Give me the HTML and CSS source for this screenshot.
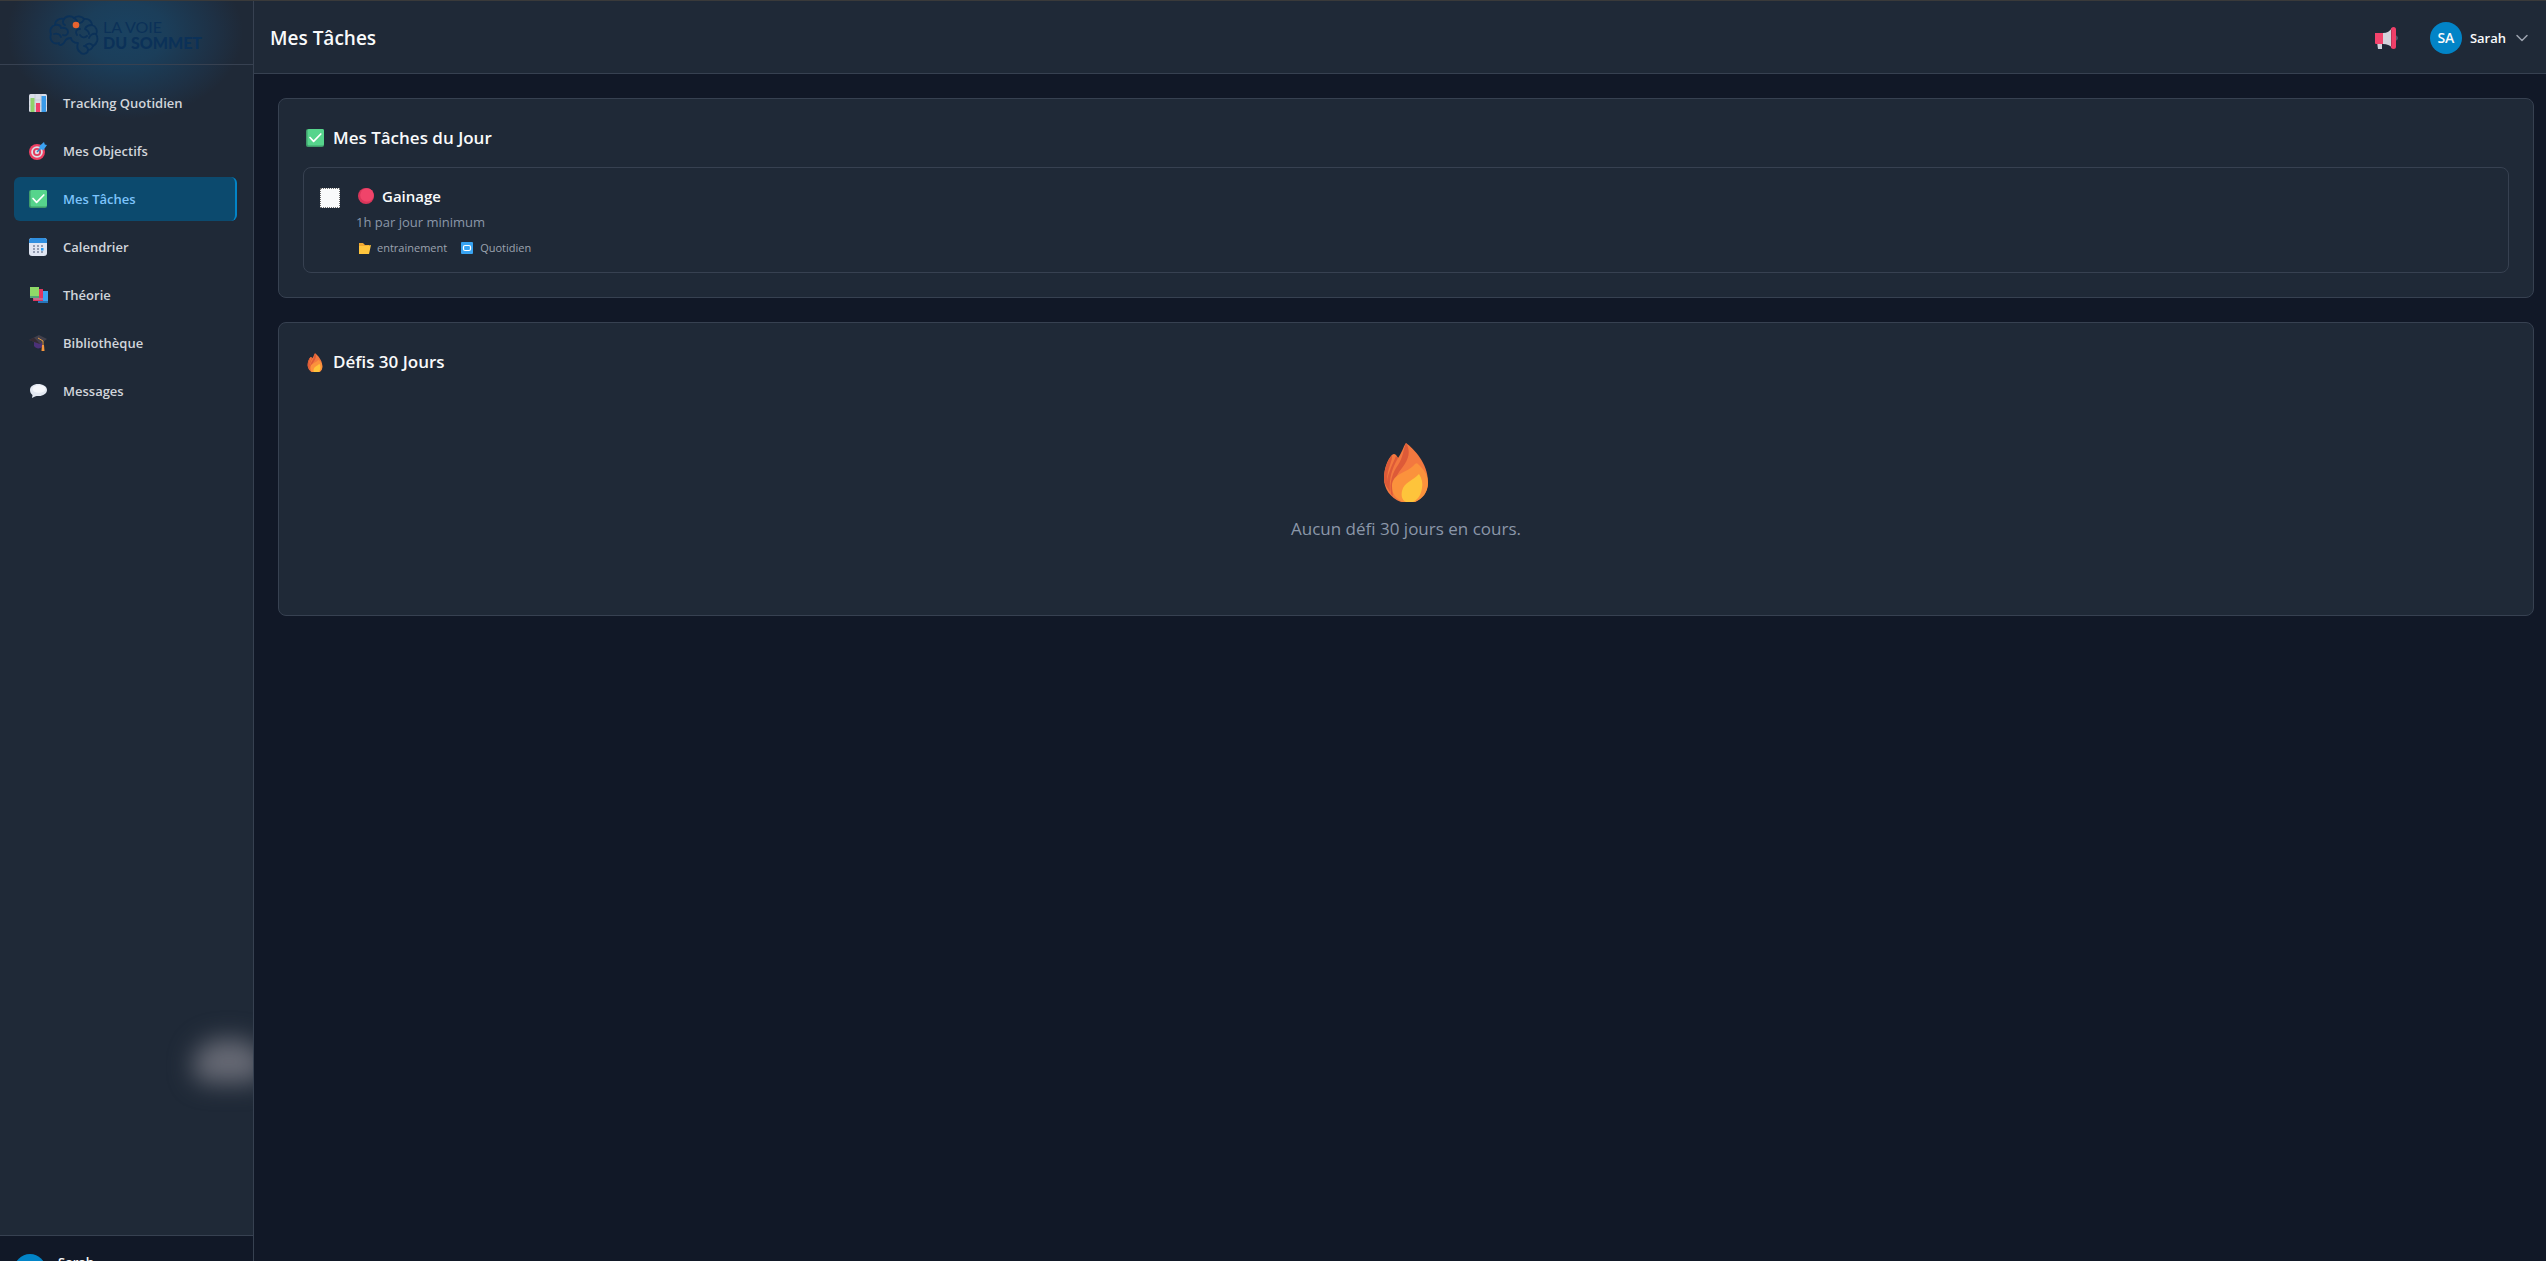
FILE: index.html
```
<!DOCTYPE html>
<html lang="fr">
<head>
    <meta charset="UTF-8">
    <meta name="viewport" content="width=device-width, initial-scale=1.0">
    <title>Mes Tâches</title>
    <link rel="stylesheet" href="styles.css">
</head>
<body>
    <!-- icones partagées -->
    <svg class="sprite" aria-hidden="true">
        <symbol id="icon-check" viewBox="0 0 20 20">
            <rect x="1" y="1" width="18" height="18" rx="2" fill="#3f9c6b"/>
            <rect x="2.5" y="1" width="16.5" height="16.5" rx="1.5" fill="#56d48c"/>
            <path d="M5 9.5l3.6 3.8L15.800 6" fill="none" stroke="#fff" stroke-width="1.7" stroke-linecap="round" stroke-linejoin="round"/>
        </symbol>
        <symbol id="icon-fire" class="fire" viewBox="0 0 60 60">
            <path d="M30 4C38 10 52 24 52 43c0 9-5 16-13 20H25C14 59 8 49 8 40c0-10 3-19 8-24 2-2 4-1 6 3 4-5 5-11 8-15z" fill="#f3783f"/>
            <path d="M8 40c0-9 3-18 8-24 1 6-5 13-5 26l2 9c-3-4-5-7-5-11zM20 17l2 2c-6 11-9 19-8 34l-3-5c-1-11 5-21 9-31zM30 4c5 8 3 16-4 25-7 9-11 17-9 28l-2-2c-2-12 2-22 7-29 5-7 5-15 8-22z" fill="#dd5a38"/>
            <path d="M44 27c6 6 8 11 8 17 0 10-6 16-13 19H27c-7-3-11-8-11-16 0-13 16-13 23-22 2-2 3 0 5 2z" fill="#fb923c"/>
            <path d="M43 35c3 5 4 9 3 14-1 8-5 12-9 14h-7c-4-2-5-6-4-11 2-9 11-10 17-17z" fill="#fec43b"/>
        </symbol>
    </svg>

    <div class="app">
        <aside class="sidebar">
            <div class="logo">
                <svg class="logo-brain" viewBox="0 0 50 40" aria-hidden="true">
                    <g fill="none" stroke="#0b3158" stroke-width="1.800" stroke-linecap="round" stroke-linejoin="round">
                        <path d="M10 28C4 30 0 25 2 19c-2-5 1-8 4-9 0-5 5-7 9-6 3-4 8-3 10-1 4-3 9-1 10 1 5-1 8 3 8 6 4 1 6 6 4 9 3 5 1 10-3 12-1 3-3 4-5 4 0 4-6 5-8 2-3-2-3-6-2-9-5 0-7-3-7-5-4 0-5 1-6 3-2 5-7 5-6 2"/>
                        <path d="M6 10c4-1 6 1 6 3M15 4c-2 3-1 5 1 6M5 19c3-1 6 0 7 3M12 13c4-1 7 1 7 4s-3 4-5 3M25 3c2 1 3 2 3 4M35 4c-1 3-3 4-5 4M43 10c-3 0-6 1-7 4 2 1 4 3 4 5M47 19c-3-1-6 1-7 4M31 14c-4 0-5 3-3 6M31 20c2 3 5 3 7 1M44 31c-2-3-5-3-7-1M39 35c0-2-2-4-4-4"/>
                    </g>
                    <circle cx="27" cy="10" r="3.300" fill="#e8632f"/>
                </svg>
                <div class="logo-text">
                    <span class="logo-light">LA VOIE</span>
                    <span class="logo-bold">DU SOMMET</span>
                </div>
            </div>

            <nav class="menu">
                <a class="menu-item" href="#tracking">
                    <svg class="menu-icon" viewBox="0 0 20 20" aria-hidden="true">
                        <rect x="1" y="1" width="18" height="18" rx="1.500" fill="#d9dde8"/>
                        <path d="M7 1v18M13 1v18M1 7h18M1 13h18" stroke="#bcc3d1" stroke-width=".6"/>
                        <rect x="2.500" y="5" width="4" height="14" fill="#8fd16a"/>
                        <rect x="8" y="10" width="4" height="9" fill="#ef3f6b"/>
                        <rect x="13.500" y="3" width="4.500" height="16" fill="#3a9ae8"/>
                    </svg>
                    Tracking Quotidien
                </a>
                <a class="menu-item" href="#objectifs">
                    <svg class="menu-icon" viewBox="0 0 20 20" aria-hidden="true">
                        <circle cx="9" cy="11" r="8" fill="#ef3f62"/>
                        <circle cx="9" cy="11" r="5.800" fill="#dcdfe6"/>
                        <circle cx="9" cy="11" r="4" fill="#e23b5d"/>
                        <circle cx="9" cy="11" r="2.200" fill="#dcdfe6"/>
                        <path d="M9 11l5-5" stroke="#3180c4" stroke-width="1.500"/>
                        <path d="M11.500 8V5L16 1l.8 2.500L19 4l-3.500 5z" fill="#3ba2f2"/>
                    </svg>
                    Mes Objectifs
                </a>
                <a class="menu-item active" href="#taches" aria-current="page">
                    <svg class="menu-icon" aria-hidden="true"><use href="#icon-check"/></svg>
                    Mes Tâches
                </a>
                <a class="menu-item" href="#calendrier">
                    <svg class="menu-icon" viewBox="0 0 20 20" aria-hidden="true">
                        <rect x="1" y="1" width="18" height="18" rx="3" fill="#dfe5f2"/>
                        <path d="M1 6V4a3 3 0 0 1 3-3h12a3 3 0 0 1 3 3v2z" fill="#2f8fe0"/>
                        <path d="M5 8h2v2H5zM9 8h2v2H9zM13 8h2v2h-2zM5 11h2v2H5zM9 11h2v2H9zM5 14h2v2H5zM9 14h2v2H9zM13 14h2v2h-2z" fill="#949db2"/>
                        <rect x="13" y="11" width="2.500" height="2.500" fill="#259af0"/>
                    </svg>
                    Calendrier
                </a>
                <a class="menu-item" href="#theorie">
                    <svg class="menu-icon" viewBox="0 0 20 20" aria-hidden="true">
                        <path d="M9 6h11v12H11z" fill="#3aa5f2"/>
                        <path d="M10 16h10v2H10z" fill="#2873b8"/>
                        <path d="M5 4h10v12H5z" fill="#df3760"/>
                        <path d="M5 13h10v2H6z" fill="#c5698e"/>
                        <path d="M2 2h9v11H3L2 12z" fill="#8fd968"/>
                        <path d="M2 11h9v2H2z" fill="#50a579"/>
                    </svg>
                    Théorie
                </a>
                <a class="menu-item" href="#bibliotheque">
                    <svg class="menu-icon" viewBox="0 0 20 20" aria-hidden="true">
                        <path d="M6 9v4c2 3 6 3 8 1V8z" fill="#4b3178"/>
                        <path d="M1 7l10-5 8 4-7 5z" fill="#42404c"/>
                        <path d="M1 7l5-2.500L12 11z" fill="#352a33"/>
                        <path d="M10 5l5 3v6" fill="none" stroke="#e39a45"/>
                        <path d="M14 12h2l.5 6h-3z" fill="#f7963d"/>
                    </svg>
                    Bibliothèque
                </a>
                <a class="menu-item" href="#messages">
                    <svg class="menu-icon" viewBox="0 0 20 20" aria-hidden="true">
                        <path d="M10 3c5 0 9 2.500 9 6s-4 6-8 6c-2 0-3 0-4 .5L4 17l.5-3C3 13 2 11 2 9c0-3.500 3.500-6 8-6z" fill="#e3e8f1"/>
                        <ellipse cx="11" cy="8" rx="6.500" ry="3.800" fill="#f5f7fb"/>
                    </svg>
                    Messages
                </a>
            </nav>

            <div class="cloud"></div>

            <div class="sidebar-user">
                <span class="avatar">SA</span>
                <span class="sidebar-name">Sarah</span>
            </div>
        </aside>

        <div class="content">
            <header class="topbar">
                <h1>Mes Tâches</h1>
                <div class="topbar-right">
                    <button class="icon-btn" type="button" aria-label="Annonces">
                        <svg viewBox="0 0 24 24" aria-hidden="true">
                            <path d="M21 9c4 1 4 5 0 6z" fill="#4e5a6b"/>
                            <path d="M3 16h5v7H4z" fill="#cdd0da"/>
                            <path d="M1 7h8v11H2a1 1 0 0 1-1-1z" fill="#f3436c"/>
                            <path d="M9 7c4 0 7-2 9-5v20c-2-3-5-4-9-4z" fill="#d3d3dc"/>
                            <rect x="17" y="1" width="5" height="22" rx="2.500" fill="#ef3f68"/>
                            <path d="M17.500 4v16" stroke="#bd3458"/>
                        </svg>
                    </button>
                    <button class="user-btn" type="button">
                        <span class="avatar">SA</span>
                        <span class="user-name">Sarah</span>
                        <svg class="chevron" viewBox="0 0 16 16" aria-hidden="true">
                            <path d="M3 5.500l5 5 5-5" fill="none" stroke="#9ca3af" stroke-width="1.500" stroke-linecap="round" stroke-linejoin="round"/>
                        </svg>
                    </button>
                </div>
            </header>

            <main class="page">
                <section class="card">
                    <h2>
                        <svg class="title-icon" aria-hidden="true"><use href="#icon-check"/></svg>
                        Mes Tâches du Jour
                    </h2>
                    <div class="task">
                        <input class="task-check" type="checkbox" id="task-gainage">
                        <div class="task-body">
                            <label class="task-title" for="task-gainage">
                                <svg class="dot" viewBox="0 0 20 20" aria-hidden="true">
                                    <circle cx="10" cy="10" r="8" fill="#d9365a"/>
                                    <circle cx="11" cy="9" r="6.800" fill="#f0446a"/>
                                </svg>
                                Gainage
                            </label>
                            <p class="task-desc">1h par jour minimum</p>
                            <div class="task-meta">
                                <span class="tag">
                                    <svg class="tag-icon" viewBox="0 0 16 16" aria-hidden="true">
                                        <path d="M3 3h4l2 2h4v9H3z" fill="#f0a832"/>
                                        <path d="M3 14V6h7l5-1-2 9z" fill="#ffc53d"/>
                                    </svg>
                                    entrainement
                                </span>
                                <span class="tag">
                                    <svg class="tag-icon" viewBox="0 0 16 16" aria-hidden="true">
                                        <rect x="2" y="2" width="12" height="12" rx="1" fill="#38a3f1"/>
                                        <rect x="4.500" y="5.500" width="7" height="5" rx="1.500" fill="none" stroke="#fff" stroke-width="1.200"/>
                                    </svg>
                                    Quotidien
                                </span>
                            </div>
                        </div>
                    </div>
                </section>

                <section class="card">
                    <h2>
                        <svg class="title-icon" aria-hidden="true"><use href="#icon-fire"/></svg>
                        Défis 30 Jours
                    </h2>
                    <div class="empty">
                        <svg class="empty-icon" aria-hidden="true"><use href="#icon-fire"/></svg>
                        <p>Aucun défi 30 jours en cours.</p>
                    </div>
                </section>
            </main>
        </div>
    </div>
</body>
</html>
```
FILE: styles.css
```
* {
    box-sizing: border-box;
    margin: 0;
    padding: 0;
}

body {
    font-family: "Open Sans", "Noto Sans", sans-serif;
    background-color: #111827;
    color: #f9fafb;
    overflow: hidden;
}

button {
    font: inherit;
    color: inherit;
    background: none;
    border: none;
    cursor: pointer;
}

.sprite {
    position: absolute;
    width: 0;
    height: 0;
}

.fire {
    overflow: visible;
}

.app {
    display: flex;
    height: 100vh;
    border-top: 1px solid #3a3a3a;
}

/* menu de gauche */
.sidebar {
    position: relative;
    display: flex;
    flex-direction: column;
    flex-shrink: 0;
    width: 254px;
    background-color: #1f2937;
    background-image: radial-gradient(ellipse 118px 86px at 125px 32px, #1a4261 0%, #1b3e5a 35%, #1e3044 78%, #1f2937 100%);
    background-repeat: no-repeat;
    border-right: 1px solid #374151;
    overflow: hidden;
}

.logo {
    display: flex;
    align-items: center;
    justify-content: center;
    gap: 4px;
    flex-shrink: 0;
    height: 64px;
    padding: 4px 2px 0 0;
    border-bottom: 1px solid #374151;
}

.logo-brain {
    width: 50px;
    height: 40px;
}

.logo-text {
    display: flex;
    flex-direction: column;
    font-family: Lato, sans-serif;
    font-size: 16px;
    line-height: 16px;
    color: #0b3158;
}

.logo-light {
    font-weight: 400;
}

.logo-bold {
    font-weight: 900;
}

.menu {
    display: flex;
    flex-direction: column;
    flex: 1;
    gap: 4px;
    padding: 16px 16px 16px 14px;
}

.menu-item {
    display: flex;
    align-items: center;
    gap: 15px;
    height: 44px;
    padding: 0 14px;
    border-radius: 6px;
    font-size: 13px;
    font-weight: 600;
    color: #d1d5db;
    text-decoration: none;
}

.menu-item.active {
    background-color: #0c4a6e;
    border-right: 2px solid #0284c7;
    color: #7dc4fc;
}

.menu-icon {
    width: 20px;
    height: 20px;
}

.cloud {
    position: absolute;
    right: -12px;
    bottom: 178px;
    width: 72px;
    height: 44px;
    border-radius: 36px 36px 20px 20px;
    background-color: #666974;
    filter: blur(12px);
}

.sidebar-user {
    display: flex;
    flex-shrink: 0;
    gap: 12px;
    height: 26px;
    padding: 16px 14px 0;
    background-color: #111827;
    border-top: 1px solid #374151;
    overflow: hidden;
}

.sidebar-user .avatar {
    margin-top: 2px;
}

.sidebar-name {
    font-size: 13px;
    font-weight: 600;
    line-height: 20px;
}

.avatar {
    display: flex;
    align-items: center;
    justify-content: center;
    flex-shrink: 0;
    width: 32px;
    height: 32px;
    border-radius: 50%;
    background-color: #0284c7;
    font-size: 14px;
    font-weight: 600;
}

/* partie droite */
.content {
    flex: 1;
    min-width: 0;
}

.topbar {
    display: flex;
    align-items: center;
    justify-content: space-between;
    height: 73px;
    padding: 1px 16px 0;
    background-color: #1f2937;
    border-bottom: 1px solid #374151;
}

h1 {
    font-size: 19px;
    font-weight: 600;
}

.topbar-right {
    display: flex;
    align-items: center;
    gap: 32px;
}

.icon-btn svg {
    display: block;
    width: 24px;
    height: 24px;
}

.user-btn {
    display: flex;
    align-items: center;
    gap: 8px;
}

.user-name {
    font-size: 13px;
    font-weight: 600;
}

.chevron {
    width: 16px;
    height: 16px;
}

.page {
    display: flex;
    flex-direction: column;
    gap: 24px;
    padding: 24px 12px 24px 24px;
}

.card {
    padding: 24px;
    background-color: #1f2937;
    border: 1px solid #374151;
    border-radius: 8px;
}

h2 {
    display: flex;
    align-items: center;
    gap: 8px;
    margin-bottom: 15px;
    padding: 1px 0 0 2px;
    font-size: 17px;
    font-weight: 600;
    line-height: 28px;
}

.title-icon {
    width: 20px;
    height: 20px;
}

.task {
    display: flex;
    align-items: flex-start;
    gap: 16px;
    padding: 16px;
    border: 1px solid #374151;
    border-radius: 8px;
}

.task-check {
    appearance: none;
    width: 20px;
    height: 20px;
    margin-top: 4px;
    background-color: #f9fafb;
    border: 1px dotted #6b6b6b;
}

.task-title {
    display: flex;
    align-items: center;
    gap: 6px;
    font-size: 15px;
    font-weight: 600;
    line-height: 24px;
}

.dot {
    width: 20px;
    height: 20px;
}

.task-desc {
    margin-top: 4px;
    font-size: 13px;
    line-height: 20px;
    color: #8b97a9;
}

.task-meta {
    display: flex;
    gap: 12px;
    margin-top: 8px;
    font-size: 11px;
    line-height: 16px;
    color: #9ca3af;
}

.tag {
    display: flex;
    align-items: center;
    gap: 5px;
}

.tag-icon {
    width: 16px;
    height: 16px;
}

.empty {
    display: flex;
    flex-direction: column;
    align-items: center;
    gap: 16px;
    padding: 48px 0;
    font-size: 17px;
    line-height: 28px;
    color: #8b97a9;
}

.empty-icon {
    width: 60px;
    height: 60px;
    overflow: visible;
}
```
